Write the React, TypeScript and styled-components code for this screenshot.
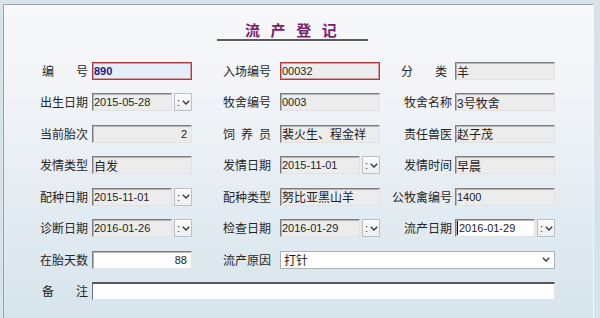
import React from "react";
import styled, { createGlobalStyle, css } from "styled-components";

const GlobalStyle = createGlobalStyle`
  * { box-sizing: border-box; }
  html, body { margin: 0; padding: 0; }
  body {
    background: #d6e3eb;
    font-family: "Noto Sans CJK SC", "Liberation Sans", sans-serif;
    overflow: hidden;
  }
`;

type Tone = "gray" | "white" | "alert" | "current";

interface FieldProps {
  $tone?: Tone;
  $right?: boolean;
  $num?: boolean;
  $span?: number;
}

const Chevron = () => (
  <svg width="8" height="5" viewBox="0 0 8 5">
    <polyline points="0.8,0.8 4,4 7.2,0.8" fill="none" stroke="#333" strokeWidth="1.3" />
  </svg>
);

const Panel = styled.div`
  margin: 4px 0 0 3px;
  width: 591px;
  height: 314px;
  padding-left: 36px;
  border-top: 1px solid #9aa4ad;
  border-left: 1px solid #9aa4ad;
  border-right: 1px solid #f2f6f9;
  background: linear-gradient(180deg, #f8f8fa 0%, #f2f4f7 28%, #e4ecf2 62%, #d7e4ec 100%);
`;

const TitleBar = styled.div`
  width: 151px;
  margin-left: 177px;
  padding: 16px 0 0 28px;
  border-bottom: 2px solid #5b5b5e;
  box-shadow: 0 1px 0 #ffffff;
`;

const Title = styled.h1`
  margin: 0;
  font-size: 15px;
  line-height: 18px;
  font-weight: 700;
  letter-spacing: 10.6px;
  color: #7a1f6f;
`;

const Form = styled.div`
  margin-top: 21px;
  display: grid;
  grid-template-columns: 52px 100px 88px 100px 75px 100px;
  grid-auto-rows: 18px;
  row-gap: 13.43px;
`;

const Label = styled.div<{ $pr: number }>`
  display: flex;
  justify-content: flex-end;
  align-items: center;
  padding-right: ${(p) => p.$pr}px;
  font-size: 12px;
  line-height: 18px;
  color: #262626;
  white-space: nowrap;
`;

const Spread = styled.span<{ $w: number }>`
  display: inline-block;
  width: ${(p) => p.$w}px;
  text-align: justify;
  text-align-last: justify;
`;

const toneStyles: Record<Tone, ReturnType<typeof css>> = {
  gray: css`
    background: #ececec;
    border-top: 1px solid #7d7d7d;
    border-left: 1px solid #7d7d7d;
    border-right: 1px solid #e2e2e2;
    border-bottom: 1px solid #e2e2e2;
    box-shadow: inset 1px 1px 0 #b4b4b4;
  `,
  white: css`
    background: #fdfdfd;
    border-top: 1px solid #7d7d7d;
    border-left: 1px solid #7d7d7d;
    border-right: 1px solid #e2e2e2;
    border-bottom: 1px solid #e2e2e2;
    box-shadow: inset 1px 1px 0 #b4b4b4;
  `,
  alert: css`
    background: #ededed;
    border: 1px solid #a83d3f;
    box-shadow: inset 0 0 0 1px #d59a9b;
  `,
  current: css`
    background: #e4edf8;
    border: 1px solid #a83d3f;
    box-shadow: inset 0 0 0 1px #d59a9b;
    color: #1c1c86;
    font-weight: 700;
  `,
};

const Field = styled.div<FieldProps>`
  height: 18px;
  display: flex;
  align-items: center;
  justify-content: ${(p) => (p.$right ? "flex-end" : "flex-start")};
  padding: 0 ${(p) => (p.$right ? 4 : 1)}px 0 1px;
  font-family: "Liberation Sans", "Noto Sans CJK SC", sans-serif;
  font-size: ${(p) => (p.$num ? 11 : 12)}px;
  color: #1e1e1e;
  white-space: nowrap;
  overflow: hidden;
  ${(p) => (p.$span ? `grid-column: span ${p.$span};` : "")}
  ${(p) => toneStyles[p.$tone ?? "gray"]}
`;

const DateWrap = styled.div`
  display: flex;
  gap: 2px;
`;

const DateBox = styled(Field)`
  width: 80px;
  flex: none;
`;

const Caret = styled.span`
  width: 1px;
  height: 14px;
  margin-right: 1px;
  background: #111;
`;

const Spinner = styled.div`
  width: 18px;
  height: 18px;
  display: flex;
  align-items: center;
  gap: 2px;
  padding-left: 2px;
  border: 1px solid #b9c0c6;
  background: linear-gradient(180deg, #fbfbfb, #eceef0);
  font-family: "Liberation Sans", sans-serif;
  font-size: 11px;
  color: #333;
`;

const Select = styled.div`
  grid-column: span 3;
  height: 18px;
  display: flex;
  align-items: center;
  justify-content: space-between;
  padding: 0 4px 0 3px;
  background: #ffffff;
  border: 1px solid #acb1b6;
  font-size: 12px;
  color: #1e1e1e;
`;

const Remark = styled.div`
  grid-column: span 5;
  height: 18px;
  background: #fdfdfd;
  border-top: 2px solid #555a5e;
  border-left: 1px solid #6d7175;
  border-right: 1px solid #e2e2e2;
  border-bottom: 1px solid #e2e2e2;
`;

const DateField = ({ value, tone = "gray", caret }: { value: string; tone?: Tone; caret?: boolean }) => (
  <DateWrap>
    <DateBox $tone={tone} $num>
      {caret && <Caret />}
      {value}
    </DateBox>
    <Spinner>
      <span>:</span>
      <Chevron />
    </Spinner>
  </DateWrap>
);

const App = () => (
  <>
    <GlobalStyle />
    <Panel>
      <TitleBar>
        <Title>流产登记</Title>
      </TitleBar>
      <Form>
        <Label $pr={4}><Spread $w={46}>编号</Spread></Label>
        <Field $tone="current" $num>890</Field>
        <Label $pr={9}>入场编号</Label>
        <Field $tone="alert" $num>00032</Field>
        <Label $pr={8}><Spread $w={46}>分类</Spread></Label>
        <Field>羊</Field>

        <Label $pr={4}>出生日期</Label>
        <DateField value="2015-05-28" />
        <Label $pr={9}>牧舍编号</Label>
        <Field $num>0003</Field>
        <Label $pr={3}>牧舍名称</Label>
        <Field>3号牧舍</Field>

        <Label $pr={4}>当前胎次</Label>
        <Field $right $num>2</Field>
        <Label $pr={9}><Spread $w={48}>饲养员</Spread></Label>
        <Field>裴火生、程金祥</Field>
        <Label $pr={3}>责任兽医</Label>
        <Field>赵子茂</Field>

        <Label $pr={4}>发情类型</Label>
        <Field>自发</Field>
        <Label $pr={9}>发情日期</Label>
        <DateField value="2015-11-01" />
        <Label $pr={3}>发情时间</Label>
        <Field>早晨</Field>

        <Label $pr={4}>配种日期</Label>
        <DateField value="2015-11-01" />
        <Label $pr={9}>配种类型</Label>
        <Field>努比亚黑山羊</Field>
        <Label $pr={3}>公牧禽编号</Label>
        <Field $num>1400</Field>

        <Label $pr={4}>诊断日期</Label>
        <DateField value="2016-01-26" />
        <Label $pr={9}>检查日期</Label>
        <DateField value="2016-01-29" />
        <Label $pr={3}>流产日期</Label>
        <DateField value="2016-01-29" tone="white" caret />

        <Label $pr={4}>在胎天数</Label>
        <Field $tone="white" $right $num>88</Field>
        <Label $pr={9}>流产原因</Label>
        <Select>
          <span>打针</span>
          <Chevron />
        </Select>

        <Label $pr={4}><Spread $w={46}>备注</Spread></Label>
        <Remark />
      </Form>
    </Panel>
  </>
);

export default App;
